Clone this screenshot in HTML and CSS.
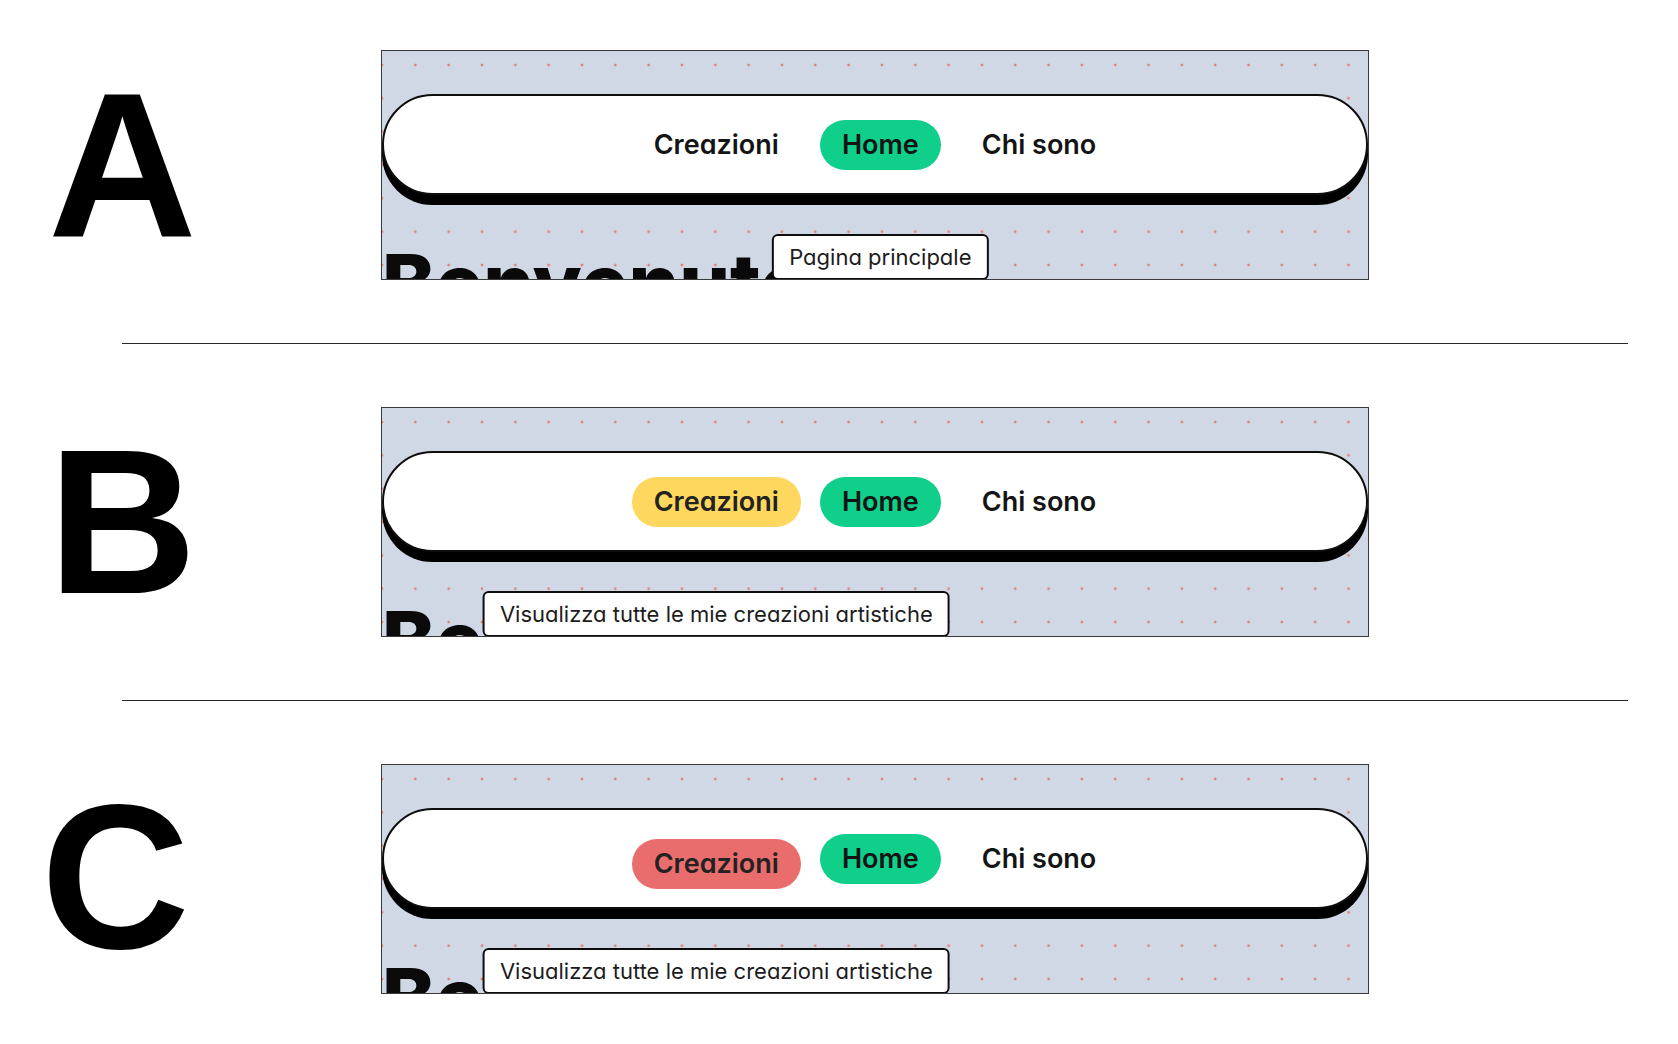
FILE: index.html
```html
<!DOCTYPE html>
<html lang="it">
<head>
<meta charset="utf-8">
<title>Navigazione – stati</title>
<link rel="stylesheet" href="styles.css">
</head>
<body>
<main class="page">
  <section class="row">
    <div class="label">A</div>
    <div class="panel">
      <nav class="nav">
        <ul class="nav-list">
          <li class="nav-item"><a class="pill">Creazioni</a></li>
          <li class="nav-item"><a class="pill pill-home">Home</a><span class="tooltip">Pagina principale</span></li>
          <li class="nav-item"><a class="pill">Chi sono</a></li>
        </ul>
      </nav>
      <h1 class="hero">Benvenuto!</h1>
    </div>
  </section>
  <hr class="divider">
  <section class="row">
    <div class="label label-b">B</div>
    <div class="panel">
      <nav class="nav">
        <ul class="nav-list">
          <li class="nav-item"><a class="pill pill-hover">Creazioni</a><span class="tooltip">Visualizza tutte le mie creazioni artistiche</span></li>
          <li class="nav-item"><a class="pill pill-home">Home</a></li>
          <li class="nav-item"><a class="pill">Chi sono</a></li>
        </ul>
      </nav>
      <h1 class="hero">Benvenuto!</h1>
    </div>
  </section>
  <hr class="divider">
  <section class="row">
    <div class="label label-c">C</div>
    <div class="panel">
      <nav class="nav">
        <ul class="nav-list">
          <li class="nav-item"><a class="pill pill-active">Creazioni</a><span class="tooltip">Visualizza tutte le mie creazioni artistiche</span></li>
          <li class="nav-item"><a class="pill pill-home">Home</a></li>
          <li class="nav-item"><a class="pill">Chi sono</a></li>
        </ul>
      </nav>
      <h1 class="hero">Benvenuto!</h1>
    </div>
  </section>
</main>
</body>
</html>
```
FILE: styles.css
```css
* { box-sizing: border-box; }

html, body {
  margin: 0;
  padding: 0;
  background: #ffffff;
}

body {
  width: 1678px;
  height: 1044px;
  overflow: hidden;
  font-family: "Liberation Sans", Arial, sans-serif;
}

.page {
  padding-top: 50px;
  display: flex;
  flex-direction: column;
}

.row {
  display: grid;
  grid-template-columns: 381px 988px;
  align-items: center;
  height: 230px;
}

.label {
  font-family: "Liberation Sans", Arial, sans-serif;
  font-weight: 700;
  font-size: 206px;
  line-height: 1;
  color: #000;
  padding-left: 48px;
  margin-top: 0;
}

.label-b { padding-left: 48px; }
.label-c { padding-left: 41px; margin-top: -4px; }

.divider {
  border: 0;
  height: 1px;
  background: #262626;
  width: 1506px;
  margin: 63px 0 63px 122px;
}

.panel {
  position: relative;
  height: 230px;
  border: 1px solid #3a3a3a;
  overflow: hidden;
  background-color: #d1d8e5;
  background-image: radial-gradient(circle, #dd8274 1.1px, rgba(221, 130, 116, 0) 1.7px);
  background-size: 33.33px 33.33px;
  background-position: -16.67px -2.67px;
  font-family: Inter, "Noto Sans", sans-serif;
  font-feature-settings: "cv11" 1;
}

.nav {
  margin-top: 43px;
  height: 101px;
  background: #ffffff;
  border: 2px solid #0d0d0d;
  border-radius: 51px;
  box-shadow: 0 10px 0 #000;
  display: flex;
  align-items: center;
  justify-content: center;
}

.nav-list {
  list-style: none;
  margin: 0;
  padding: 0;
  display: flex;
  align-items: center;
  gap: 19px;
}

.nav-item {
  position: relative;
}

.pill {
  display: block;
  height: 50px;
  line-height: 50px;
  padding: 0 22px;
  border-radius: 25px;
  font-size: 27px;
  font-weight: 600;
  color: #141414;
  white-space: nowrap;
}

.pill-home { background: #0fcf8b; }
.pill-hover { background: #fed75f; color: #222; }
.pill-active { background: #e86d6c; color: #222; transform: translateY(5px); }

.tooltip {
  position: absolute;
  z-index: 2;
  top: 114px;
  left: 50%;
  transform: translateX(-50%);
  white-space: nowrap;
  background: #fff;
  border: 2px solid #0d0d0d;
  border-radius: 6px;
  padding: 7px 15px;
  font-size: 22px;
  line-height: 28px;
  font-weight: 400;
  color: #1c1c1c;
}

.hero {
  margin: 40px 0 0 0;
  font-size: 80px;
  line-height: 1.2;
  font-weight: 800;
  color: #0a0a0a;
  white-space: nowrap;
}
```
